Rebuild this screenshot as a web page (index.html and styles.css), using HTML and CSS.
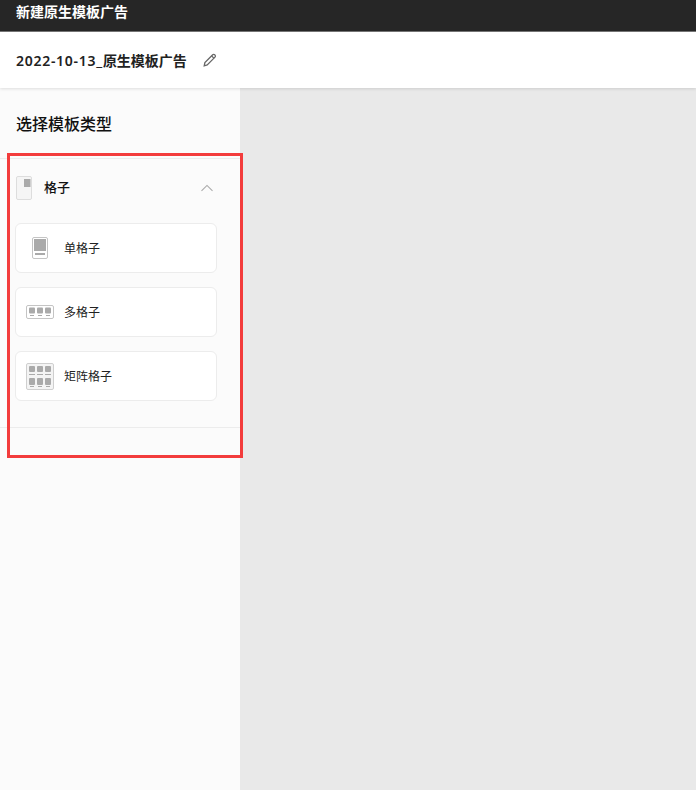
FILE: index.html

```html
<!DOCTYPE html>
<html lang="zh-CN">
<head>
    <meta charset="UTF-8">
    <meta name="viewport" content="width=device-width, initial-scale=1.0">
    <title>新建原生模板广告</title>

    <link rel="stylesheet" href="styles.css">
</head>
<body>

    <div class="topbar">新建原生模板广告</div>

    <div class="name-bar">
        <span class="name"><span class="name-date">2022-10-13_</span>原生模板广告</span>
        <svg class="edit-icon" width="16" height="16" viewBox="0 0 16 16" fill="none" stroke="#666" stroke-width="1.3">
            <path d="M2.2 13.8l.7-3.2 7.8-7.8a1.4 1.4 0 0 1 2 0l.3.3a1.4 1.4 0 0 1 0 2l-7.8 7.8z"/>
            <path d="M9.6 3.9l2.5 2.5"/>
        </svg>
    </div>

    <div class="main">
        <div class="sidebar">
            <h2 class="side-title">选择模板类型</h2>

            <div class="group">
                <div class="group-head">
                    <svg width="16" height="24" viewBox="0 0 16 24">
                        <rect x="0.5" y="0.5" width="15" height="23" rx="1.5" fill="#f5f5f5" stroke="#ddd"/>
                        <rect x="8" y="3" width="6.5" height="8" fill="#aaa"/>
                    </svg>
                    <span class="group-name">格子</span>
                    <svg class="chevron" width="14" height="14" viewBox="0 0 14 14" fill="none" stroke="#aaa" stroke-width="1.1">
                        <path d="M1.5 9.8L7 4.4l5.5 5.4"/>
                    </svg>
                </div>

                <div class="cards">
                    <div class="card">
                        <div class="card-icon">
                            <svg width="16" height="22" viewBox="0 0 16 22">
                                <rect x="0.5" y="0.5" width="15" height="21" rx="1.5" fill="#fff" stroke="#c4c4c4"/>
                                <rect x="2" y="2" width="12" height="12" fill="#aaa"/>
                                <rect x="3" y="16" width="10" height="2" fill="#aaa"/>
                            </svg>
                        </div>
                        <span>单格子</span>
                    </div>

                    <div class="card">
                        <div class="card-icon">
                            <svg width="28" height="14" viewBox="0 0 28 14">
                                <rect x="0.5" y="0.5" width="27" height="13" rx="1.5" fill="#fff" stroke="#c4c4c4"/>
                                <rect x="3" y="2.5" width="6" height="6" rx="1" fill="#aaa"/>
                                <rect x="11" y="2.5" width="6" height="6" rx="1" fill="#aaa"/>
                                <rect x="19" y="2.5" width="6" height="6" rx="1" fill="#aaa"/>
                                <rect x="4" y="10" width="4" height="1" fill="#aaa"/>
                                <rect x="12" y="10" width="4" height="1" fill="#aaa"/>
                                <rect x="20" y="10" width="4" height="1" fill="#aaa"/>
                            </svg>
                        </div>
                        <span>多格子</span>
                    </div>

                    <div class="card">
                        <div class="card-icon">
                            <svg width="28" height="27" viewBox="0 0 28 27">
                                <rect x="0.5" y="0.5" width="27" height="26" rx="1.5" fill="#f4f4f4" stroke="#cfcfcf"/>
                                <rect x="3" y="3" width="6" height="6" rx="1" fill="#aaa"/>
                                <rect x="11" y="3" width="6" height="6" rx="1" fill="#aaa"/>
                                <rect x="19" y="3" width="6" height="6" rx="1" fill="#aaa"/>
                                <rect x="3" y="11" width="6" height="1" fill="#aaa"/>
                                <rect x="11" y="11" width="6" height="1" fill="#aaa"/>
                                <rect x="19" y="11" width="6" height="1" fill="#aaa"/>
                                <rect x="3" y="15" width="6" height="7" rx="1" fill="#aaa"/>
                                <rect x="11" y="15" width="6" height="7" rx="1" fill="#aaa"/>
                                <rect x="19" y="15" width="6" height="7" rx="1" fill="#aaa"/>
                                <rect x="4" y="23" width="4" height="1" fill="#aaa"/>
                                <rect x="12" y="23" width="4" height="1" fill="#aaa"/>
                                <rect x="20" y="23" width="4" height="1" fill="#aaa"/>
                            </svg>
                        </div>
                        <span>矩阵格子</span>
                    </div>
                </div>
            </div>

            <!-- red annotation frame drawn over the group -->
            <div class="mark"></div>
        </div>
        <div class="canvas"></div>
    </div>

</body>
</html>
```

FILE: styles.css

```css
*{
    box-sizing: border-box;
}

body{
    margin: 0;
    height: 790px;
    display: flex;
    flex-direction: column;
    overflow: hidden;
    font-family: "Noto Sans", "Noto Sans CJK SC", sans-serif;
    color: #222;
}

.topbar{
    height: 32px;
    flex: none;
    padding: 2px 16px 0;
    background-color: #262626;
    border-bottom: 1px solid #777;
    color: #fff;
    font-size: 14px;
    font-weight: 700;
    line-height: 20px;
}

.name-bar{
    height: 56px;
    flex: none;
    display: flex;
    align-items: center;
    gap: 15px;
    padding: 0 0 1px 16px;
    background-color: #fff;
    box-shadow: 0px 1px 3px rgba(0, 0, 0, 0.12);
    position: relative;
    z-index: 2;
}

.name{
    font-size: 14px;
    font-weight: 600;
}

.name-date{
    letter-spacing: 0.72px;
}

.edit-icon{
    display: block;
}

.main{
    flex: 1;
    display: flex;
}

.sidebar{
    width: 240px;
    flex: none;
    background-color: #fbfbfb;
    position: relative;
}

.canvas{
    flex: 1;
    background-color: #e9e9e9;
}

.side-title{
    margin: 0;
    height: 71px;
    padding: 24px 16px 0;
    font-size: 16px;
    font-weight: 500;
    line-height: 24px;
    color: #111;
    border-bottom: 1px solid #ececec;
}

.group{
    height: 269px;
    border-bottom: 1px solid #ececec;
}

.group-head{
    height: 58px;
    display: flex;
    align-items: center;
    padding: 0 26px 0 16px;
}

.group-name{
    flex: 1;
    margin-left: 12px;
    padding-bottom: 3px;
    font-size: 13px;
    font-weight: 500;
    color: #111;
}

.cards{
    display: flex;
    flex-direction: column;
    gap: 14px;
    margin: 6px 0 0 15px;
    width: 202px;
}

.card{
    height: 50px;
    display: flex;
    align-items: center;
    background-color: #fff;
    border: 1px solid #ececec;
    border-radius: 6px;
    font-size: 12px;
    color: #222;
}

.card-icon{
    width: 48px;
    flex: none;
    display: flex;
    justify-content: center;
}

.card-icon svg{
    display: block;
}

.mark{
    position: absolute;
    left: 7px;
    top: 65px;
    width: 236px;
    height: 305px;
    border: 3px solid #f33c3c;
    z-index: 3;
}
```
